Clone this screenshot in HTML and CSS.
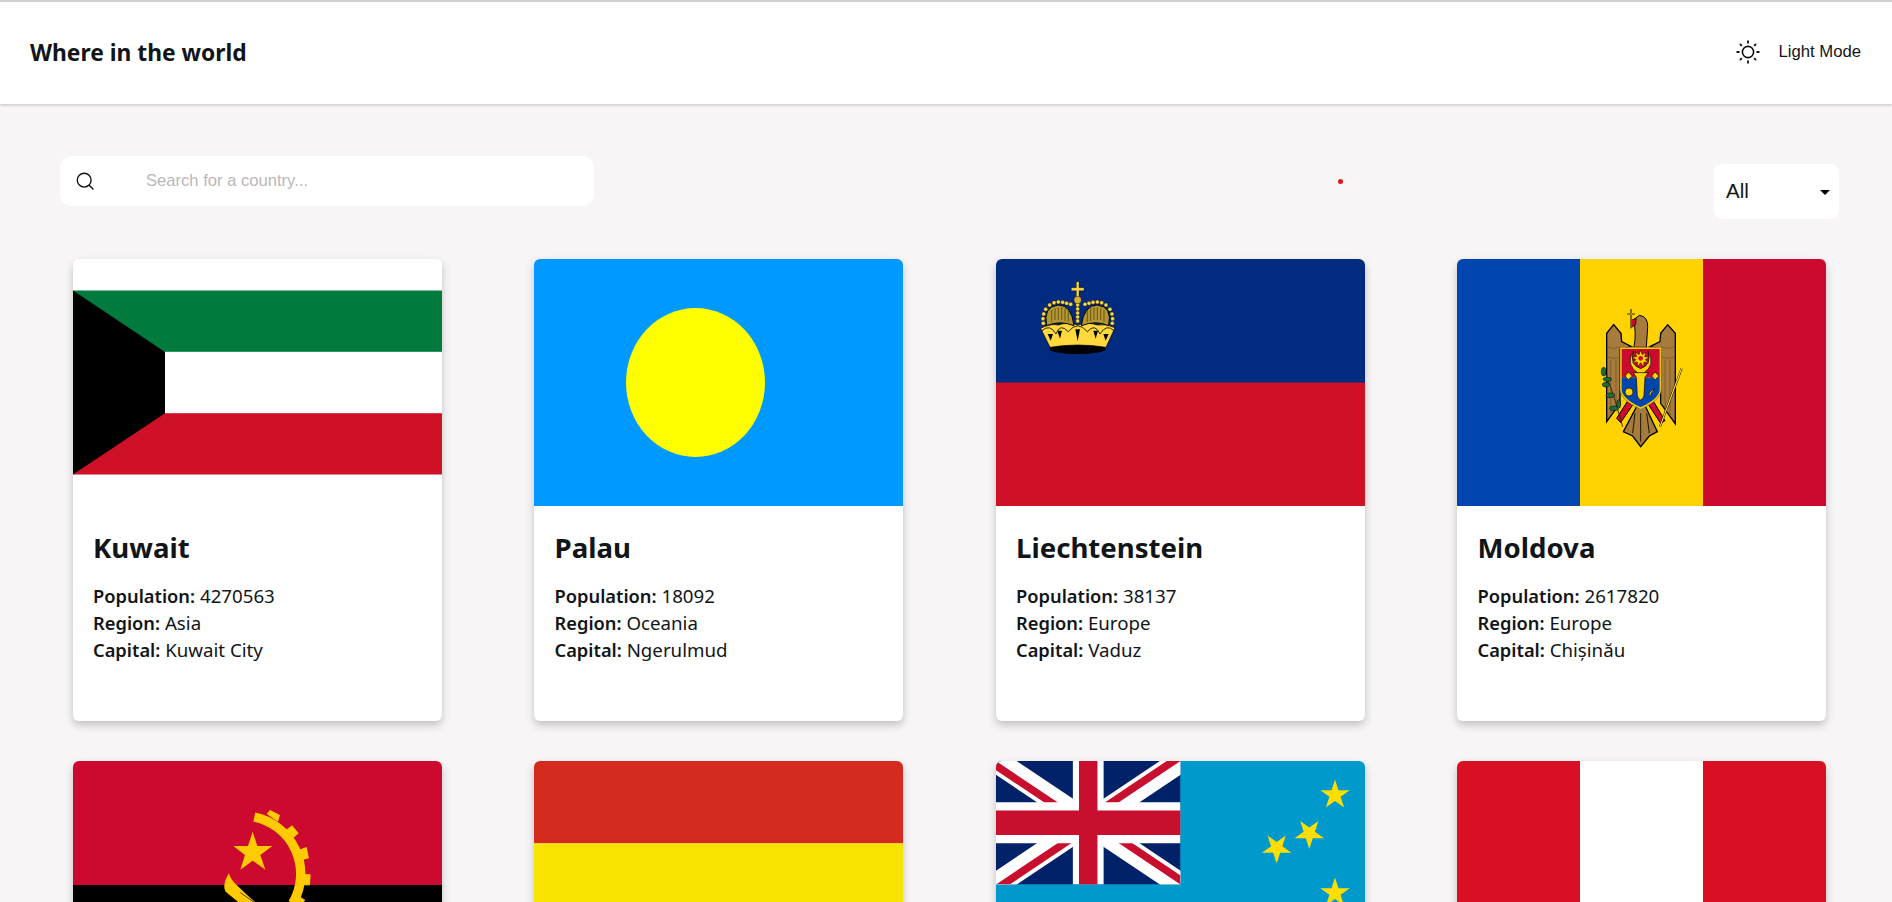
FILE: index.html
```html
<!DOCTYPE html>
<html lang="en">
<head>
<meta charset="utf-8">
<title>Where in the world</title>
<link rel="stylesheet" href="styles.css">
</head>
<body>
<header class="topbar">
  <h1 class="brand">Where in the world</h1>
  <button class="mode" type="button">
    <svg class="sun" viewBox="0 0 24 24" fill="none" stroke="#111" stroke-linecap="round">
      <circle cx="12" cy="12" r="5.6" stroke-width="1.6"/>
      <path stroke-width="1.8" d="M12 1.2v1.6M12 21.2v1.6M1.2 12h1.6M21.2 12h1.6M4.4 4.4l.9.9M18.7 18.7l.9.9M4.4 19.6l.9-.9M18.7 5.3l.9-.9"/>
    </svg>
    <span>Light Mode</span>
  </button>
</header>
<main class="page">
  <section class="tools">
    <label class="search">
      <svg class="lens" viewBox="0 0 18 18" fill="none" stroke="#111" stroke-width="1.4" stroke-linecap="round">
        <circle cx="8.2" cy="8.2" r="6.9"/>
        <path d="M13.2 13.2l3.8 3.8"/>
      </svg>
      <input type="text" placeholder="Search for a country...">
    </label>
    <span class="dot"></span>
    <div class="filter">
      <select><option>All</option><option>Africa</option><option>Americas</option><option>Asia</option><option>Europe</option><option>Oceania</option></select>
    </div>
  </section>
  <section class="grid">
    <article class="card">
      <svg class="flag" viewBox="0 0 369 247">
        <rect width="369" height="247" fill="#fff"/>
        <rect y="31.5" width="369" height="61.4" fill="#007a3d"/>
        <rect y="92.9" width="369" height="61.3" fill="#fff"/>
        <rect y="154.2" width="369" height="61.3" fill="#ce1126"/>
        <polygon points="0,31.5 92,92.9 92,154.2 0,215.5" fill="#000"/>
      </svg>
      <div class="info">
        <h2>Kuwait</h2>
        <p><b>Population:</b> 4270563</p><p><b>Region:</b> Asia</p><p><b>Capital:</b> Kuwait City</p>
      </div>
    </article>
    <article class="card">
      <svg class="flag" viewBox="0 0 369 247">
        <rect width="369" height="247" fill="#0099ff"/>
        <ellipse cx="161.5" cy="123.5" rx="69.5" ry="74.5" fill="#ffff00"/>
      </svg>
      <div class="info">
        <h2>Palau</h2>
        <p><b>Population:</b> 18092</p><p><b>Region:</b> Oceania</p><p><b>Capital:</b> Ngerulmud</p>
      </div>
    </article>
    <article class="card">
      <svg class="flag" viewBox="0 0 369 247">
        <rect width="369" height="124" fill="#002b7f"/>
        <rect y="123.5" width="369" height="123.5" fill="#ce1126"/>
        <g transform="translate(4 1) scale(.3333)">
          <ellipse cx="233" cy="268" rx="85" ry="14" fill="#000"/>
          <path d="M122 205Q150 190 175 195Q205 185 233 195Q262 185 292 195Q320 190 345 203L318 262Q233 248 150 262Z" fill="#ffd83d" stroke="#000" stroke-width="2"/>
          <path d="M140 197Q128 140 175 135Q215 135 222 197Q180 180 140 197Z" fill="#b3962f" stroke="#000" stroke-width="3"/>
          <path d="M326 197Q338 140 292 135Q252 135 244 197Q288 180 326 197Z" fill="#b3962f" stroke="#000" stroke-width="3"/>
          <path d="M155 150v35M165 145v35M175 142v38M185 142v38M195 145v38M205 150v36M262 150v36M272 145v38M282 142v38M292 142v38M302 145v35M312 150v35" stroke="#5d4d14" stroke-width="2.5"/>
          <g fill="#ffd83d" stroke="#000" stroke-width="1">
            <circle cx="130" cy="190" r="6"/><circle cx="129" cy="176" r="6"/><circle cx="131" cy="162" r="6"/><circle cx="137" cy="148" r="6"/><circle cx="149" cy="135" r="6"/><circle cx="162" cy="128" r="6"/><circle cx="175" cy="126" r="6"/><circle cx="188" cy="127" r="6"/><circle cx="200" cy="130" r="6"/><circle cx="212" cy="133" r="6"/>
            <circle cx="337" cy="190" r="6"/><circle cx="338" cy="176" r="6"/><circle cx="336" cy="162" r="6"/><circle cx="330" cy="148" r="6"/><circle cx="318" cy="135" r="6"/><circle cx="305" cy="128" r="6"/><circle cx="292" cy="126" r="6"/><circle cx="279" cy="127" r="6"/><circle cx="267" cy="130" r="6"/><circle cx="255" cy="133" r="6"/>
            <circle cx="233" cy="135" r="6"/><circle cx="233" cy="147" r="6"/><circle cx="233" cy="159" r="6"/><circle cx="233" cy="171" r="6"/><circle cx="233" cy="183" r="6"/>
            <circle cx="233" cy="120" r="11" fill="#d9b437"/>
            <path d="M229 65h8v18h15v9h-15v18h-8V92h-15v-9h15z"/>
          </g>
          <path d="M143 222l16 0-7 20zM172 212l14 0-6 24zM226 208h14l-7 36zM280 212h14l-7 24zM310 222h16l-9 20z" fill="#000"/>
          <path d="M126 212Q150 190 168 222M168 222Q180 188 205 215M205 215Q233 180 262 215M262 215Q285 188 300 222M300 222Q320 190 342 212" fill="none" stroke="#000" stroke-width="2.5"/>
        </g>
      </svg>
      <div class="info">
        <h2>Liechtenstein</h2>
        <p><b>Population:</b> 38137</p><p><b>Region:</b> Europe</p><p><b>Capital:</b> Vaduz</p>
      </div>
    </article>
    <article class="card">
      <svg class="flag" viewBox="0 0 369 247">
        <rect width="123" height="247" fill="#0046ae"/>
        <rect x="123" width="123" height="247" fill="#ffd200"/>
        <rect x="246" width="123" height="247" fill="#cc092f"/>
        <g transform="translate(113 31) scale(.3333)">
          <path d="M110 395V130L131 104L153 130L155 155L185 170L150 178V340Z" fill="#a77b3b" stroke="#000" stroke-width="4"/>
          <path d="M316 402V130L293 104L272 130L270 155L240 170L272 178V340Z" fill="#a77b3b" stroke="#000" stroke-width="4"/>
          <path d="M112 170q20 10 38 0M112 200q20 10 38 0M274 170q20 10 40 0M274 200q20 10 40 0M122 210V370M138 210V350M285 210V370M300 210V380" stroke="#5c4220" stroke-width="1.5" fill="none"/>
          <path d="M192 172Q200 125 190 90L208 76Q235 80 233 112L229 172Z" fill="#a77b3b" stroke="#000" stroke-width="3"/>
          <path d="M183 90l16-4-2 18-12 8z" fill="#cc092f" stroke="#000" stroke-width="2"/>
          <path d="M183 58V115M172 72H194" stroke="#000" stroke-width="5"/>
          <path d="M183 58V115M172 72H194" stroke="#ffd200" stroke-width="2.5"/>
          <path d="M205 340L160 425L188 438L212 470L238 438L262 425L222 340Z" fill="#a77b3b" stroke="#000" stroke-width="4"/>
          <path d="M195 370L188 430M212 370V455M230 370L238 430" stroke="#000" stroke-width="2.5"/>
          <path d="M175 330L140 385L152 398L188 345Z" fill="#cc092f" stroke="#000" stroke-width="3"/>
          <path d="M248 330L285 392L272 400L236 345Z" fill="#cc092f" stroke="#000" stroke-width="3"/>
          <path d="M100 235Q125 290 158 410" stroke="#3b2a10" stroke-width="3" fill="none"/>
          <g fill="#1f6b3a" stroke="#000" stroke-width="1.5">
            <ellipse cx="101" cy="245" rx="7" ry="13"/><ellipse cx="112" cy="268" rx="13" ry="6"/><ellipse cx="108" cy="284" rx="11" ry="7"/><ellipse cx="121" cy="316" rx="13" ry="7"/><ellipse cx="132" cy="355" rx="13" ry="7"/><ellipse cx="146" cy="342" rx="6" ry="13"/>
          </g>
          <path d="M335 235L270 410" stroke="#000" stroke-width="6"/>
          <path d="M335 235L270 410" stroke="#ffe04a" stroke-width="3.5"/>
          <path d="M150 172H274V300Q272 330 212 358Q152 330 150 300Z" fill="#ffd200" stroke="#8a6a1a" stroke-width="2"/>
          <path d="M155 177H269V262H155Z" fill="#cc092f"/>
          <path d="M155 262H269V300Q267 326 212 352Q157 326 155 300Z" fill="#0046ae"/>
          <path d="M190 183Q165 225 205 250H220Q258 225 234 183Q246 225 212 236Q178 225 190 183Z" fill="#ffd200" stroke="#000" stroke-width="2"/>
          <path d="M212 180l5 14 11-8-4 14 14 1-12 8 10 10-14-3-1 14-9-12-9 12-1-14-14 3 10-10-12-8 14-1-4-14 11 8z" fill="#ffd200" stroke="#000" stroke-width="1.5"/>
          <circle cx="212" cy="205" r="7" fill="#cc092f"/>
          <path d="M190 248H235L225 262L222 318Q212 342 202 318L199 262Z" fill="#ffd200" stroke="#000" stroke-width="2"/>
          <path d="M165 258l10-12 12 12-12 12zM245 258l10-12 12 12-12 12z" fill="#ffd200" stroke="#000" stroke-width="2"/>
          <circle cx="177" cy="306" r="12" fill="#ffd200" stroke="#000" stroke-width="2"/>
          <path d="M255 296Q232 305 240 322Q243 305 255 296Z" fill="#ffd200" stroke="#000" stroke-width="1.5"/>
        </g>
      </svg>
      <div class="info">
        <h2>Moldova</h2>
        <p><b>Population:</b> 2617820</p><p><b>Region:</b> Europe</p><p><b>Capital:</b> Chișinău</p>
      </div>
    </article>
    <article class="card">
      <svg class="flag" viewBox="0 0 369 247">
        <rect width="369" height="124" fill="#cc092f"/>
        <rect y="124" width="369" height="123" fill="#000"/>
        <g transform="translate(-13 -11) scale(.3333)" fill="#ffcb00">
          <polygon points="578,245 592,288 637,288 601,315 616,359 578,332 541,359 555,315 520,288 564,288"/>
          <path d="M583 201A174 174 0 0 1 698 460" fill="none" stroke="#ffcb00" stroke-width="28"/>
          <path d="M620 192l10-12 30 15-6 20zM678 240l18-14 20 24-16 14zM715 300l25-9 7 34-24 6zM730 372l22 1-2 33-23 0zM720 440l16 10-12 16-14-10z"/>
          <path d="M507 370Q485 405 497 425L600 510L650 510Q580 455 530 405Q512 390 507 370Z"/>
          <path d="M541 428L590 462" stroke="#000" stroke-width="2"/>
        </g>
      </svg>
    </article>
    <article class="card">
      <svg class="flag" viewBox="0 0 369 247">
        <rect width="369" height="82.4" fill="#d52b1e"/>
        <rect y="82.4" width="369" height="82.3" fill="#f9e300"/>
        <rect y="164.7" width="369" height="82.3" fill="#007934"/>
      </svg>
    </article>
    <article class="card">
      <svg class="flag" viewBox="0 0 369 247">
        <defs>
          <polygon id="tvstar" points="0,-1 .225,-.309 .951,-.309 .363,.118 .588,.809 0,.382 -.588,.809 -.363,.118 -.951,-.309 -.225,-.309" fill="#fedd00"/>
          <clipPath id="ujclip"><path d="M30 15H60V30ZV30H0ZH0V0ZV0H60Z"/></clipPath>
        </defs>
        <rect width="369" height="247" fill="#0099cc"/>
        <svg width="184.5" height="123.5" viewBox="0 0 60 30" preserveAspectRatio="none">
          <rect width="60" height="30" fill="#012169"/>
          <path d="M0 0L60 30M60 0L0 30" stroke="#fff" stroke-width="6"/>
          <path d="M0 0L60 30M60 0L0 30" stroke="#c8102e" stroke-width="4" clip-path="url(#ujclip)"/>
          <path d="M30 0V30M0 15H60" stroke="#fff" stroke-width="10"/>
          <path d="M30 0V30M0 15H60" stroke="#c8102e" stroke-width="6"/>
        </svg>
        <use href="#tvstar" transform="translate(339 34) scale(15.5)"/>
        <use href="#tvstar" transform="translate(313.3 72.5) scale(15.5 -15.5)"/>
        <use href="#tvstar" transform="translate(280.7 87) scale(15.5 -15.5)"/>
        <use href="#tvstar" transform="translate(339 132) scale(15.5)"/>
        <use href="#tvstar" transform="translate(306 156) scale(15.5)"/>
      </svg>
    </article>
    <article class="card">
      <svg class="flag" viewBox="0 0 369 247">
        <rect width="369" height="247" fill="#d91023"/>
        <rect x="123" width="123" height="247" fill="#fff"/>
      </svg>
    </article>
  </section>
</main>
</body>
</html>
```

FILE: styles.css
```css
* { box-sizing: border-box; }
html, body { margin: 0; padding: 0; }
html { overflow: hidden; height: 100%; }
body {
  height: 100%;
  overflow: hidden;
  background: #f7f5f6;
  color: #111517;
  font-family: "Noto Sans", sans-serif;
}
.topbar {
  display: flex;
  align-items: center;
  justify-content: space-between;
  height: 104px;
  padding: 0 31px 2px 30px;
  background: #fff;
  border-top: 2px solid #cfcfcf;
  box-shadow: 0 2px 2px rgba(0, 0, 0, .14);
}
.brand {
  margin: 0;
  font-size: 22.8px;
  font-weight: 700;
}
.mode {
  display: flex;
  align-items: center;
  gap: 18px;
  padding: 0;
  border: 0;
  background: none;
  color: #111517;
  font-family: "Liberation Sans", sans-serif;
  font-size: 16.7px;
}
.sun { width: 24px; height: 24px; }
.page { padding: 52px 53px 0 60px; }
.tools { display: flex; align-items: flex-start; }
.search {
  display: flex;
  align-items: center;
  width: 534px;
  height: 50px;
  padding-left: 16px;
  background: #fff;
  border-radius: 12px;
}
.lens { flex: none; width: 18px; height: 18px; }
.search input {
  flex: 1;
  min-width: 0;
  margin-left: 50px;
  border: 0;
  outline: 0;
  background: none;
  font-family: "Liberation Sans", sans-serif;
  font-size: 16.6px;
}
.search input::placeholder { color: #b9b7b8; opacity: 1; }
.dot {
  width: 5px;
  height: 5px;
  margin: 23px 0 0 744px;
  border-radius: 50%;
  background: #e3121e;
}
.filter {
  position: relative;
  width: 125px;
  height: 55px;
  margin: 8px 0 0 auto;
}
.filter select {
  appearance: none;
  width: 100%;
  height: 100%;
  padding: 0 0 2px 12px;
  border: 0;
  border-radius: 8px;
  background: #fff;
  color: #111517;
  font-family: "Liberation Sans", sans-serif;
  font-size: 20.5px;
}
.filter::after {
  content: "";
  position: absolute;
  right: 9px;
  top: 26px;
  border-style: solid;
  border-width: 5px 5px 0;
  border-color: #000 transparent transparent;
  pointer-events: none;
}
.grid {
  display: grid;
  grid-template-columns: repeat(4, 369px);
  column-gap: 92.5px;
  row-gap: 40px;
  margin: 40px 0 0 12.5px;
}
.card {
  height: 462px;
  overflow: hidden;
  background: #fff;
  border-radius: 6px;
  box-shadow: 0 4px 8px rgba(0, 0, 0, .22);
}
.flag { display: block; width: 369px; height: 247px; }
.info { padding: 23px 20.5px 0; }
.info h2 {
  margin: 0 0 16px;
  font-size: 27.6px;
  font-weight: 700;
  line-height: 37px;
}
.info p {
  margin: 0;
  font-size: 18.7px;
  line-height: 27px;
}
.info b { font-size: 18.3px; font-weight: 600; }
```
